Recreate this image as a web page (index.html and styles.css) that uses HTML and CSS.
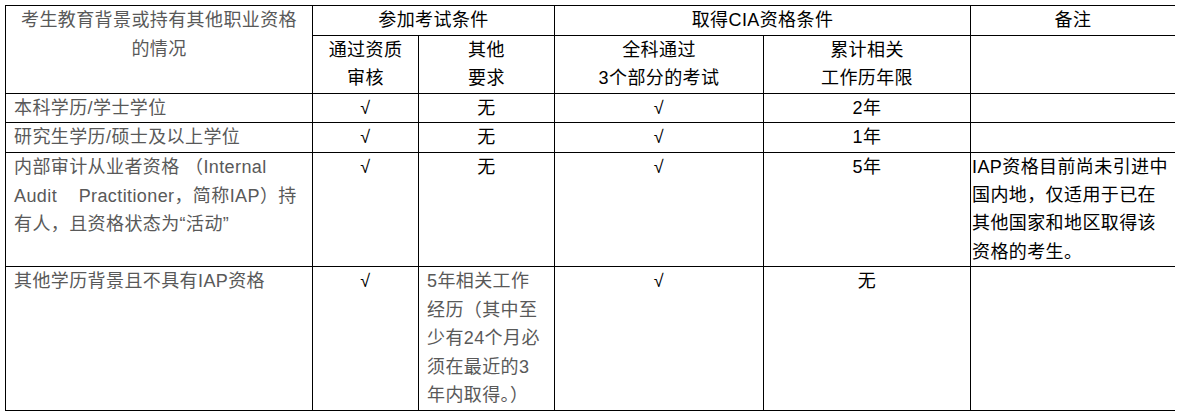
FILE: index.html
```html
<!DOCTYPE html>
<html lang="zh-CN">
<head>
<meta charset="utf-8">
<title>CIA 报考条件</title>
<link rel="stylesheet" href="styles.css">
</head>
<body>
<table class="req-table">
  <colgroup>
    <col class="c1">
    <col class="c2">
    <col class="c3">
    <col class="c4">
    <col class="c5">
    <col class="c6">
  </colgroup>
  <thead>
    <tr>
      <th class="lead" rowspan="2">考生教育背景或持有其他职业资格<br>的情况</th>
      <th colspan="2">参加考试条件</th>
      <th colspan="2">取得CIA资格条件</th>
      <th>备注</th>
    </tr>
    <tr>
      <th>通过资质<br>审核</th>
      <th>其他<br>要求</th>
      <th>全科通过<br>3个部分的考试</th>
      <th>累计相关<br>工作历年限</th>
      <th></th>
    </tr>
  </thead>
  <tbody>
    <tr>
      <td class="lead">本科学历/学士学位</td>
      <td>√</td>
      <td>无</td>
      <td>√</td>
      <td>2年</td>
      <td class="note"></td>
    </tr>
    <tr>
      <td class="lead">研究生学历/硕士及以上学位</td>
      <td>√</td>
      <td>无</td>
      <td>√</td>
      <td>1年</td>
      <td class="note"></td>
    </tr>
    <tr>
      <td class="lead">内部审计从业者资格 （Internal<br>Audit&nbsp;&nbsp;&nbsp; Practitioner，简称IAP）持<br>有人，且资格状态为“活动”</td>
      <td>√</td>
      <td>无</td>
      <td>√</td>
      <td>5年</td>
      <td class="note">IAP资格目前尚未引进中<br>国内地，仅适用于已在<br>其他国家和地区取得该<br>资格的考生。</td>
    </tr>
    <tr>
      <td class="lead">其他学历背景且不具有IAP资格</td>
      <td>√</td>
      <td class="lead">5年相关工作<br>经历（其中至<br>少有24个月必<br>须在最近的3<br>年内取得。）</td>
      <td>√</td>
      <td>无</td>
      <td class="note"></td>
    </tr>
  </tbody>
</table>
</body>
</html>
```

FILE: styles.css
```css
html, body {
  background: #ffffff;
}

body {
  margin: 5px;
  font-family: "Liberation Sans", "Noto Sans CJK SC", sans-serif;
  font-size: 18px;
  color: #000000;
}

.req-table {
  width: 1170px;
  table-layout: fixed;
  border-collapse: collapse;
  letter-spacing: 0.4px;
}

.c1 { width: 307px; }
.c2 { width: 106px; }
.c3 { width: 136px; }
.c4 { width: 209px; }
.c5 { width: 207px; }
.c6 { width: 205px; }

.req-table th,
.req-table td {
  border: 1px solid #000000;
  padding: 0 8px;
  line-height: 28.6px;
  font-weight: normal;
  text-align: center;
  vertical-align: top;
  white-space: nowrap;
}

.req-table .lead {
  color: #595959;
}

.req-table td.lead {
  text-align: left;
}

.req-table th.lead {
  text-align: center;
}

.req-table td.note {
  padding: 0 1px;
  text-align: left;
  line-height: 28.25px;
}
```
